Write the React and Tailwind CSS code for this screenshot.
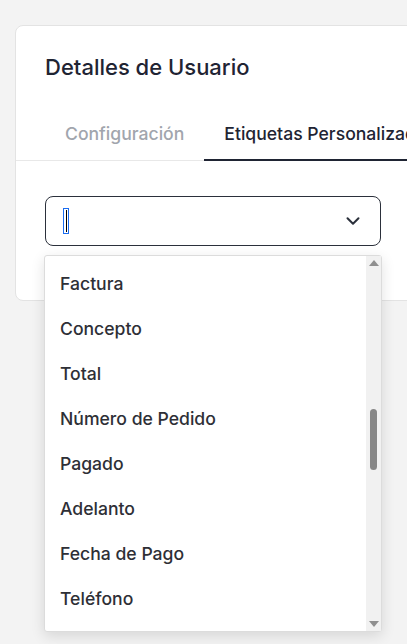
import React, { useState } from "react";
import { ChevronDown } from "lucide-react";

const labels = [
  "Factura",
  "Concepto",
  "Total",
  "Número de Pedido",
  "Pagado",
  "Adelanto",
  "Fecha de Pago",
  "Teléfono",
];

const App = () => {
  const [tab, setTab] = useState("etiquetas");

  return (
    <div
      className="h-[644px] w-full overflow-hidden bg-[#f3f3f3] pl-[15px] pt-[25px]"
      style={{ fontFamily: "Inter, 'Noto Sans', sans-serif" }}
    >
      {/* CARD */}
      <div className="w-[500px] shrink-0 rounded-lg border border-[#e3e3e3] bg-white">
        <h2 className="px-[29px] pt-[26px] text-[22px] leading-[30px] font-medium text-[#1f2433]">
          Detalles de Usuario
        </h2>

        {/* TABS */}
        <div className="mt-[24px] flex border-b border-[#e8e8e8] px-[29px] whitespace-nowrap">
          <button
            onClick={() => setTab("config")}
            className={`-mb-px px-5 pt-[15px] pb-[12px] text-[17.6px] leading-[26px] font-medium border-b-2 ${
              tab === "config" ? "border-[#1f2433] text-[#1f2433]" : "border-transparent text-[#a1a5ad]"
            }`}
          >
            Configuración
          </button>
          <button
            onClick={() => setTab("etiquetas")}
            className={`-mb-px px-5 pt-[15px] pb-[12px] text-[17.6px] leading-[26px] font-medium border-b-2 ${
              tab === "etiquetas" ? "border-[#1f2433] text-[#1f2433]" : "border-transparent text-[#a1a5ad]"
            }`}
          >
            Etiquetas Personalizadas
          </button>
        </div>

        {/* SELECT */}
        <div className="px-[29px] pt-[35px] pb-[54px]">
          <div className="relative w-[336px]">
            <div className="flex h-[50px] items-center justify-between rounded-lg border border-[#2b303b] pl-[17px] pr-[16px]">
              <span className="flex h-[26px] w-[6px] items-center justify-center border border-[#1a6cf0]">
                <span className="h-[22px] w-px bg-black" />
              </span>
              <ChevronDown size={22} strokeWidth={2.2} className="text-[#2b303b]" />
            </div>

            {/* DROPDOWN */}
            <div className="absolute -left-px top-[59px] z-10 flex h-[377px] w-[338px] rounded-[3px] border border-[#dcdcdc] bg-white shadow-[0_4px_14px_rgba(0,0,0,0.12)]">
              <ul className="flex-1 pt-[6px]">
                {labels.map((label) => (
                  <li
                    key={label}
                    className="flex h-[45px] cursor-pointer items-center pl-[15px] text-[17.6px] font-medium text-[#2e2f36] hover:bg-gray-50"
                  >
                    {label}
                  </li>
                ))}
              </ul>

              {/* scrollbar */}
              <div className="flex w-[15px] flex-col items-center bg-[#f1f1f1] py-[4px]">
                <span className="h-0 w-0 border-x-[5px] border-b-[6px] border-x-transparent border-b-[#8f8f8f]" />
                <div className="flex-1 w-full flex flex-col items-center">
                  <div className="h-[143px]" />
                  <div className="h-[61px] w-[7px] rounded-full bg-[#878787]" />
                </div>
                <span className="h-0 w-0 border-x-[5px] border-t-[6px] border-x-transparent border-t-[#8f8f8f]" />
              </div>
            </div>
          </div>
        </div>
      </div>
    </div>
  );
};

export default App;
